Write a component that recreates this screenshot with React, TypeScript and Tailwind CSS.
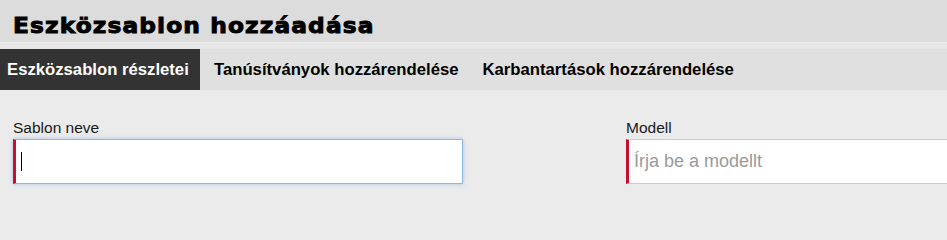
import React from "react";

export default function App() {
  return (
    <div className="w-full h-screen min-h-[202px] overflow-hidden bg-[#ebebeb]" style={{ fontFamily: '"Liberation Sans", Arial, sans-serif' }}>
      <div className="h-[42px] bg-[#dcdcdc] flex items-center pl-[13px]">
        <h1 className="text-[21px] font-bold text-black tracking-[1px] leading-none pt-[10px] origin-left scale-x-[1.11] [-webkit-text-stroke:0.9px_black]" style={{ fontFamily: '"DejaVu Sans", sans-serif' }}>
          Eszközsablon hozzáadása
        </h1>
      </div>
      <div className="h-[7px] bg-[#e6e6e6] border-t border-[#ececec]" />
      <div className="h-[42px] bg-[#e0e0e0] border-b border-[#e9e9e9] flex">
        <div className="bg-[#333333] text-white font-bold text-[16.7px] w-[200px] pl-[7px] flex items-center">
          Eszközsablon részletei
        </div>
        <div className="text-black font-bold text-[16.7px] px-[14px] flex items-center">
          Tanúsítványok hozzárendelése
        </div>
        <div className="text-black font-bold text-[16.7px] px-[10px] flex items-center">
          Karbantartások hozzárendelése
        </div>
      </div>
      <div className="flex gap-[163px] pl-[13px] pt-[28px]">
        <div className="w-[450px] shrink-0">
          <label className="block text-[15.5px] text-[#1a1a1a] leading-[18px] mb-[2px]">Sablon neve</label>
          <div className="h-[45px] bg-white border border-[#8bb6e6] border-l-[3px] border-l-[#c8102e] shadow-[0_0_4px_rgba(120,170,230,0.6)] flex items-center pl-[5px]">
            <span className="w-px h-[19px] bg-black" />
          </div>
        </div>
        <div className="w-[450px] shrink-0">
          <label className="block text-[15.5px] text-[#1a1a1a] leading-[18px] mb-[2px]">Modell</label>
          <div className="h-[45px] bg-white border border-[#cccccc] border-l-[3px] border-l-[#c8102e] flex items-center pl-[5px]">
            <span className="text-[18px] text-[#9a9a9a]">Írja be a modellt</span>
          </div>
        </div>
      </div>
    </div>
  );
}
